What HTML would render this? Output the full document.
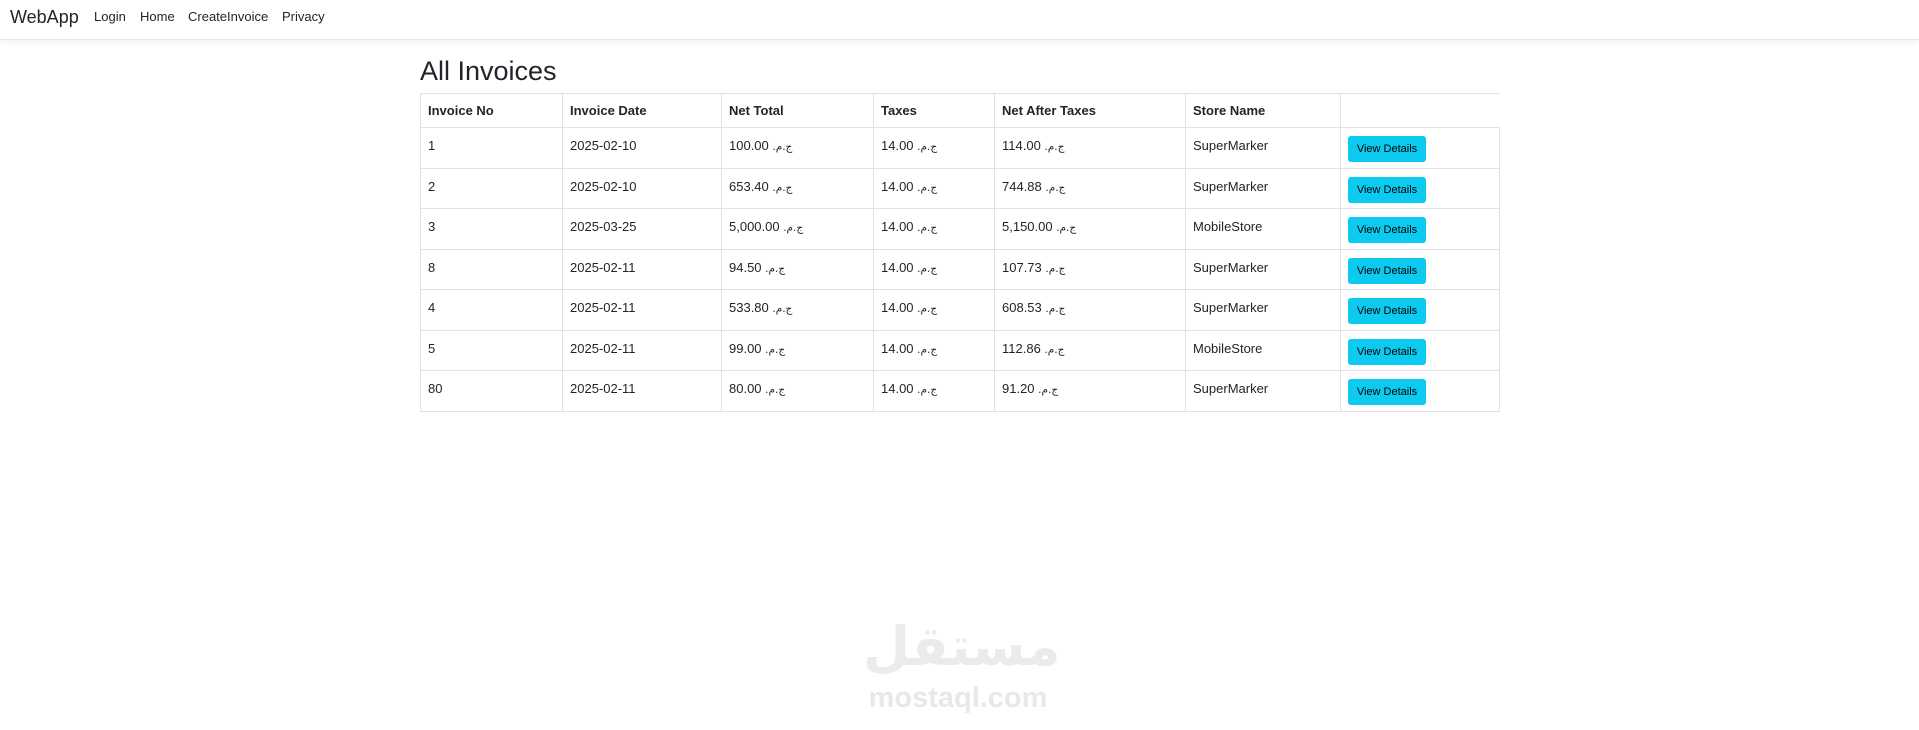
<!DOCTYPE html>
<html><head><meta charset="utf-8">
<style>
*{box-sizing:border-box;margin:0;padding:0}
body{width:1919px;height:730px;background:#fff;font-family:"Liberation Sans","Noto Sans CJK SC",sans-serif;color:#212529;position:relative;overflow:hidden}
.nav{position:absolute;left:0;top:0;width:1919px;height:40px;border-bottom:1px solid #e5e5e5;box-shadow:0 2px 6px rgba(0,0,0,.06)}
.brand{position:absolute;left:10px;top:7px;font-size:18px;color:#212529}
.nav a{position:absolute;top:9px;font-size:13px;color:#212529;text-decoration:none}
h1{position:absolute;left:420px;top:56px;font-size:27px;font-weight:500;letter-spacing:0}
table{position:absolute;left:420px;top:93px;border-collapse:collapse;font-size:13px}
td,th{border:1px solid #dee2e6;text-align:left;vertical-align:top;padding:0 7px}
th{height:34px;font-weight:bold;padding-top:9px}
td{height:40.5px;padding-top:10px}
thead tr th:last-child{border-right:none}
.btn{display:inline-block;background:#0dcaf0;color:#000;font-size:11px;width:78px;height:26px;line-height:26px;text-align:center;border-radius:3px;margin-top:-2px}
.cur{font-family:"DejaVu Sans",sans-serif;font-size:10.5px}
.wm1{position:absolute;left:863px;top:612px;width:190px;text-align:center;font-family:"DejaVu Sans",sans-serif;font-weight:bold;font-size:54px;color:#ebebeb;line-height:70px}
.wm2{position:absolute;left:863px;top:682px;width:190px;text-align:center;font-family:"Liberation Sans",sans-serif;font-weight:bold;font-size:29px;color:#e8e8e8;line-height:32px}
</style></head><body>
<div class="nav">
<span class="brand">WebApp</span>
<a style="left:94px">Login</a>
<a style="left:140px">Home</a>
<a style="left:188px">CreateInvoice</a>
<a style="left:282px">Privacy</a>
</div>
<h1>All Invoices</h1>
<table>
<colgroup><col style="width:142px"><col style="width:159px"><col style="width:152px"><col style="width:121px"><col style="width:191px"><col style="width:155px"><col style="width:159px"></colgroup>
<thead><tr><th>Invoice No</th><th>Invoice Date</th><th>Net Total</th><th>Taxes</th><th>Net After Taxes</th><th>Store Name</th><th></th></tr></thead>
<tbody>
<tr><td>1</td><td>2025-02-10</td><td>100.00 <span class="cur">ج.م.‏</span></td><td>14.00 <span class="cur">ج.م.‏</span></td><td>114.00 <span class="cur">ج.م.‏</span></td><td>SuperMarker</td><td><span class="btn">View Details</span></td></tr>
<tr><td>2</td><td>2025-02-10</td><td>653.40 <span class="cur">ج.م.‏</span></td><td>14.00 <span class="cur">ج.م.‏</span></td><td>744.88 <span class="cur">ج.م.‏</span></td><td>SuperMarker</td><td><span class="btn">View Details</span></td></tr>
<tr><td>3</td><td>2025-03-25</td><td>5,000.00 <span class="cur">ج.م.‏</span></td><td>14.00 <span class="cur">ج.م.‏</span></td><td>5,150.00 <span class="cur">ج.م.‏</span></td><td>MobileStore</td><td><span class="btn">View Details</span></td></tr>
<tr><td>8</td><td>2025-02-11</td><td>94.50 <span class="cur">ج.م.‏</span></td><td>14.00 <span class="cur">ج.م.‏</span></td><td>107.73 <span class="cur">ج.م.‏</span></td><td>SuperMarker</td><td><span class="btn">View Details</span></td></tr>
<tr><td>4</td><td>2025-02-11</td><td>533.80 <span class="cur">ج.م.‏</span></td><td>14.00 <span class="cur">ج.م.‏</span></td><td>608.53 <span class="cur">ج.م.‏</span></td><td>SuperMarker</td><td><span class="btn">View Details</span></td></tr>
<tr><td>5</td><td>2025-02-11</td><td>99.00 <span class="cur">ج.م.‏</span></td><td>14.00 <span class="cur">ج.م.‏</span></td><td>112.86 <span class="cur">ج.م.‏</span></td><td>MobileStore</td><td><span class="btn">View Details</span></td></tr>
<tr><td>80</td><td>2025-02-11</td><td>80.00 <span class="cur">ج.م.‏</span></td><td>14.00 <span class="cur">ج.م.‏</span></td><td>91.20 <span class="cur">ج.م.‏</span></td><td>SuperMarker</td><td><span class="btn">View Details</span></td></tr>
</tbody></table>
<div class="wm1">مستقل</div>
<div class="wm2">mostaql.com</div>
</body></html>
